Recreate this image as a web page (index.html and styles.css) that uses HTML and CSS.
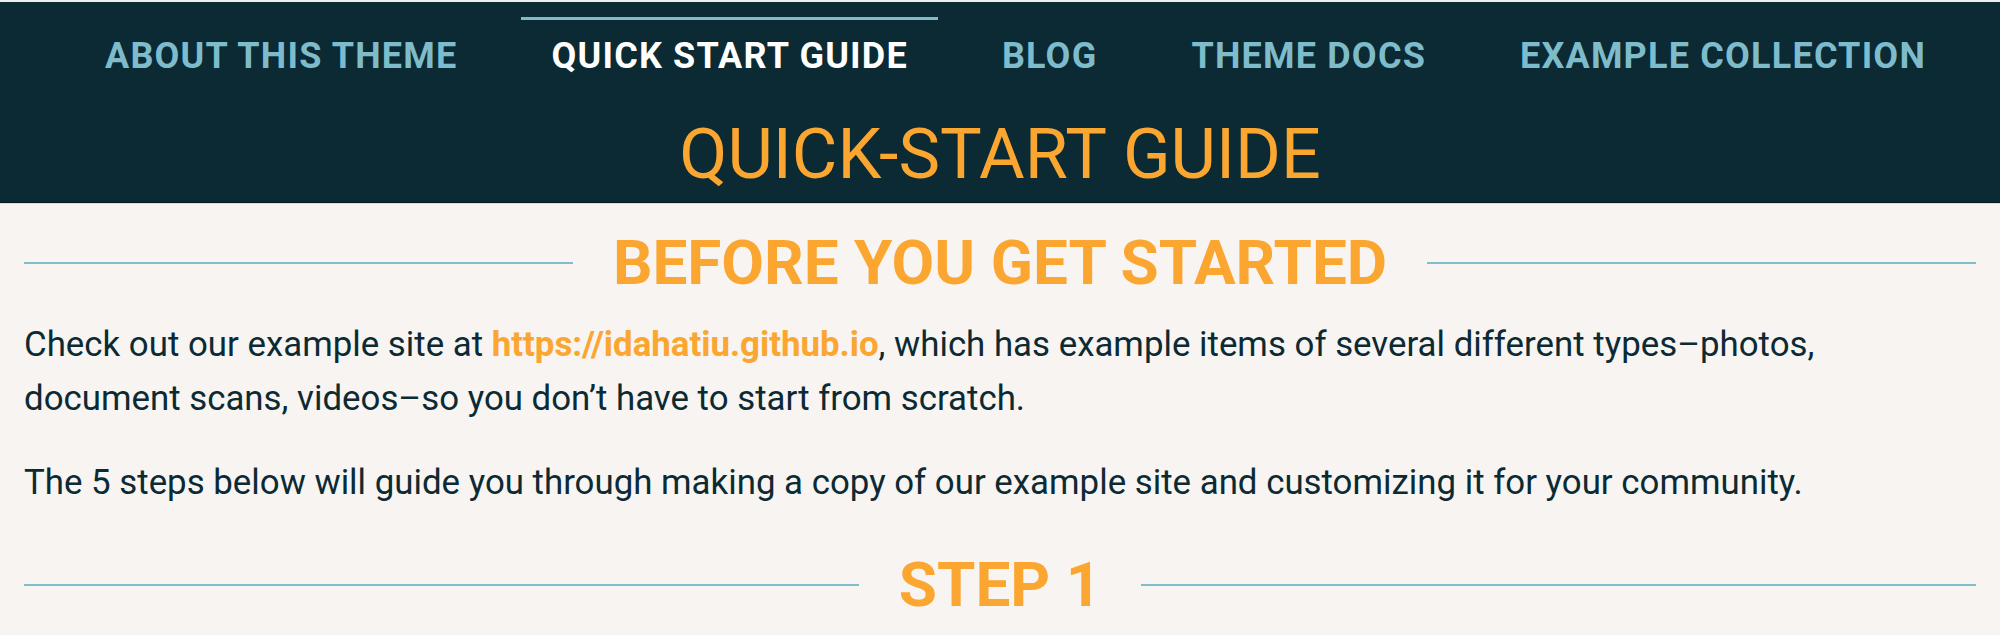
FILE: index.html
```html
<!DOCTYPE html>
<html lang="en">
<head>
<meta charset="utf-8">
<title>Quick-Start Guide</title>
<link rel="stylesheet" href="styles.css">
</head>
<body>
<div class="topstrip"></div>
<header class="site-header">
  <nav class="nav">
    <a class="nav-link" href="#">ABOUT THIS THEME</a>
    <a class="nav-link active" href="#">QUICK START GUIDE</a>
    <a class="nav-link" href="#">BLOG</a>
    <a class="nav-link" href="#">THEME DOCS</a>
    <a class="nav-link" href="#">EXAMPLE COLLECTION</a>
  </nav>
  <h1 class="page-title">QUICK-START GUIDE</h1>
</header>
<main class="content">
  <h2 class="section-title first">BEFORE YOU GET STARTED</h2>
  <p class="para">Check out our example site at <a class="link" href="#">https://idahatiu.github.io</a>, which has example items of several different types–photos, document scans, videos–so you don’t have to start from scratch.</p>
  <p class="para">The 5 steps below will guide you through making a copy of our example site and customizing it for your community.</p>
  <h2 class="section-title">STEP 1</h2>
</main>
</body>
</html>
```
FILE: styles.css
```css
html, body {
  margin: 0;
  padding: 0;
}
body {
  background: #f7f4f2;
  font-family: Roboto, "Noto Sans", sans-serif;
  color: #0c2a33;
  overflow: hidden;
}
.topstrip {
  height: 2px;
  background: #eeeeee;
}
.site-header {
  background: #0b2a33;
  padding: 15px 0 13px;
  border-bottom: 1px solid #04181e;
  box-shadow: 0 1px 0 #d6dfe0;
}
.nav {
  display: flex;
  justify-content: center;
  gap: 34px;
  padding-left: 31px;
}
.nav-link {
  display: block;
  padding: 15px 30px 0;
  border-top: 3px solid transparent;
  font-size: 36px;
  line-height: 42px;
  font-weight: 700;
  letter-spacing: 1.2px;
  color: #7ebccb;
  text-decoration: none;
}
.nav-link.active {
  color: #ffffff;
  border-top-color: #7ebccb;
}
.page-title {
  margin: 42px 0 0;
  text-align: center;
  font-size: 70px;
  line-height: 70px;
  font-weight: 400;
  color: #fba630;
}
.content {
  padding: 0 24px;
}
.section-title {
  display: flex;
  align-items: center;
  gap: 40px;
  margin: 38px 0 18px;
  font-size: 62px;
  line-height: 74px;
  font-weight: 700;
  color: #fba630;
}
.section-title.first {
  margin-top: 23px;
}
.section-title::before,
.section-title::after {
  content: "";
  flex: 1;
  height: 2px;
  background: #80bccb;
}
.para {
  max-width: 1880px;
  margin: 0 0 30px;
  font-size: 34.85px;
  line-height: 54px;
}
.link {
  color: #fba630;
  font-weight: 700;
  text-decoration: none;
}
```
